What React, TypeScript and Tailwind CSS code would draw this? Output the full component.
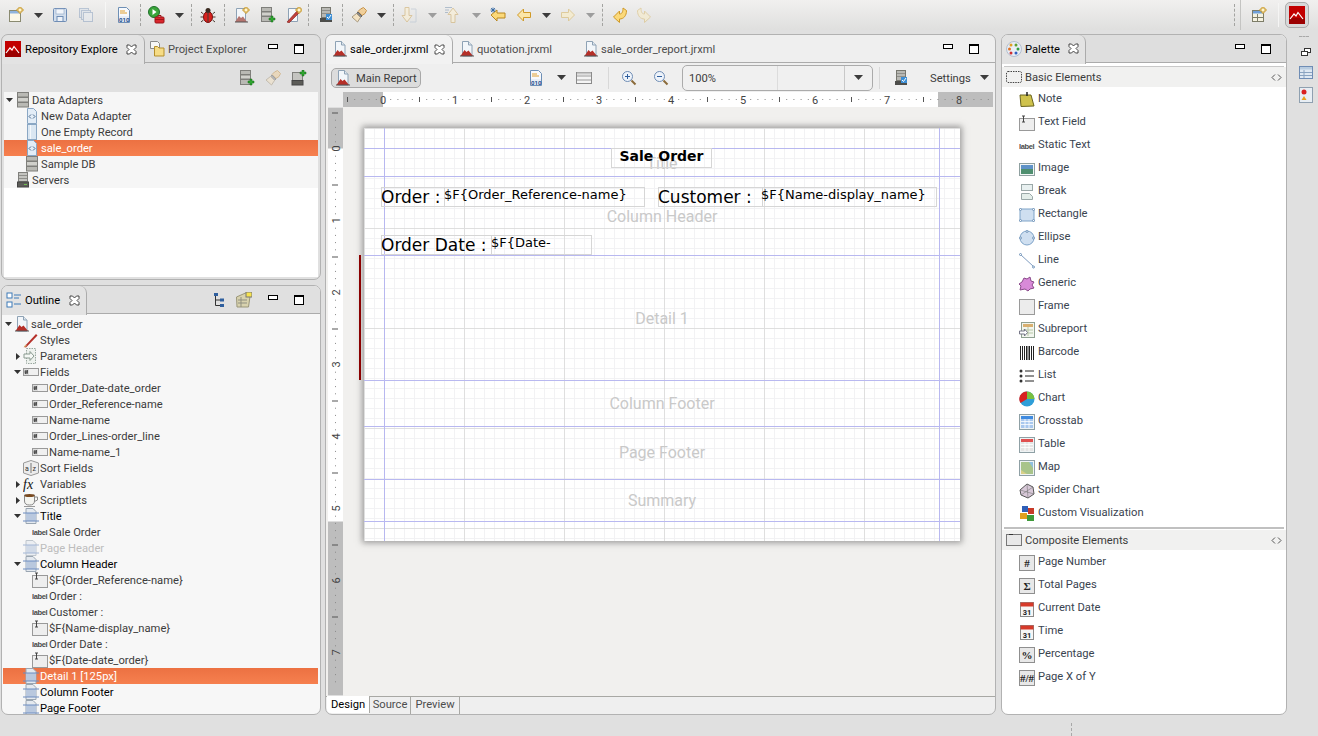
import type { ReactNode } from "react";

const Svg = ({ children, className = "" }: { children: ReactNode; className?: string }) => (
  <svg viewBox="0 0 16 16" className={"w-4 h-4 shrink-0 " + className}>
    {children}
  </svg>
);

type IconProps = { className?: string };

const ReportDoc = ({ className }: IconProps) => (
  <Svg className={className}>
    <path d="M3.500 .5h6l3.500 3.500v11h-9.500z" fill="#f2f6fa" stroke="#8ea2b5" />
    <path d="M9.500 .5v3.500h3.500" fill="#dfe7ef" stroke="#8ea2b5" />
    <path d="M1.500 15l4-6 2 2 2-1.500 4.500 5.500z" fill="#b52f28" />
    <path d="M1 15h14" stroke="#555" />
  </Svg>
);
const Database = ({ className }: IconProps) => (
  <Svg className={className}>
    <rect x="2.500" y=".5" width="11" height="4.500" fill="#b9b9b4" stroke="#7f7f7b" />
    <rect x="2.500" y="5.500" width="11" height="4.500" fill="#d0d0cb" stroke="#7f7f7b" />
    <rect x="2.500" y="10.500" width="11" height="4.500" fill="#b9b9b4" stroke="#7f7f7b" />
  </Svg>
);
const Server = ({ className }: IconProps) => (
  <Svg className={className}>
    <rect x="3.500" y=".5" width="9" height="9" fill="#c4c4c0" stroke="#80807c" />
    <path d="M4 3.500h8M4 6.500h8" stroke="#8f8f8b" />
    <rect x="2.500" y="10" width="11" height="5" fill="#5c5c58" stroke="#444" />
    <path d="M9 12.500h3" stroke="#6fbf50" />
  </Svg>
);
const XmlDoc = ({ className }: IconProps) => (
  <Svg className={className}>
    <path d="M3.500 .5h6l3 3v12h-9z" fill="#e3edf7" stroke="#8aa7c4" />
    <path d="M7 6.500l-2 2 2 2M9 6.500l2 2-2 2" fill="none" stroke="#4a6a8c" />
  </Svg>
);
const EmptyDoc = ({ className }: IconProps) => (
  <Svg className={className}>
    <rect x="3.500" y=".5" width="9" height="15" fill="#dbe7f2" stroke="#8aa7c4" />
    <path d="M6.500 1v14" stroke="#f4f8fb" />
  </Svg>
);
const PlusBadge = ({ x = 10, y = 11, color = "#2fa62f" }: { x?: number; y?: number; color?: string }) => (
  <path d={`M${x - 1} ${y - 3}h2v2h2v2h-2v2h-2v-2h-2v-2h2z`} fill={color} stroke="#17661a" strokeWidth=".5" />
);
const GoldPlus = ({ x = 12, y = 3 }: { x?: number; y?: number }) => (
  <path d={`M${x - 1} ${y - 3}h2v2h2v2h-2v2h-2v-2h-2v-2h2z`} fill="#fff6cf" stroke="#c99a2e" />
);
const DbAdd = ({ className }: IconProps) => (
  <Svg className={className}>
    <rect x="1.500" y=".5" width="10" height="4" fill="#b9b9b4" stroke="#7f7f7b" />
    <rect x="1.500" y="5" width="10" height="4" fill="#d0d0cb" stroke="#7f7f7b" />
    <rect x="1.500" y="9.500" width="10" height="5" fill="#b9b9b4" stroke="#7f7f7b" />
    <PlusBadge x={12} y={12} />
  </Svg>
);
const ServerAdd = ({ className }: IconProps) => (
  <Svg className={className}>
    <rect x="1.500" y="2.500" width="10" height="8" fill="#c4c4c0" stroke="#80807c" />
    <rect x="1" y="10.500" width="11" height="4.500" fill="#5c5c58" stroke="#444" />
    <PlusBadge x={12} y={3} />
  </Svg>
);
const Brush = ({ className = "", pale }: IconProps & { pale?: boolean }) => (
  <Svg className={className + (pale ? " opacity-50" : "")}>
    <path d="M9.500 2l3-1.500 3 3-1.500 3-3 2-4-4z" fill="#f0cf9a" stroke="#c6934a" />
    <path d="M7 5l4 4-1.500 1.500-4-4z" fill="#8a8a8a" stroke="#666" />
    <path d="M5.500 6.500l4 4-3 4.500-5.500-5z" fill="#f4e3c3" stroke="#a89a80" />
  </Svg>
);
const Close = () => (
  <svg viewBox="0 0 11 11" className="w-[11px] h-[11px] shrink-0">
    <path d="M1 1h2.500l2 2 2-2h2.500v2.500l-2 2 2 2v2.500h-2.500l-2-2-2 2h-2.500v-2.500l2-2-2-2z" fill="#fff" stroke="#333" strokeWidth=".9" />
  </svg>
);
const MinBtn = () => <div className="w-[10px] h-[5px] border border-black bg-white mb-[5px]" />;
const MaxBtn = () => (
  <div className="w-[10px] h-[10px] border border-black border-t-[2px] bg-white" />
);
const Arrow = ({ className = "", pale }: { className?: string; pale?: boolean }) => (
  <svg viewBox="0 0 9 5" className={"w-[9px] h-[5px] shrink-0 " + className}>
    <path d="M0 0h9l-4.500 5z" fill={pale ? "#9d9d9d" : "#3c3c3c"} />
  </svg>
);
const TreeDown = () => (
  <svg viewBox="0 0 7 4" className="w-[7px] h-[4px]">
    <path d="M0 0h7l-3.500 4z" fill="#333" />
  </svg>
);
const TreeRight = () => (
  <svg viewBox="0 0 4 7" className="w-[4px] h-[7px]">
    <path d="M0 0v7l4-3.500z" fill="#333" />
  </svg>
);
const Bin = ({ className }: IconProps) => (
  <Svg className={className}>
    <path d="M2.500 .5h8l3 3v12h-11z" fill="#f7f9fc" stroke="#6e8fb5" />
    <path d="M4 4h5M4 6h7" stroke="#e0a030" />
    <rect x="3" y="9" width="10" height="6" fill="#e8eef6" />
    <text x="3" y="14.500" className="text-[6px] font-bold" fill="#1e4f8e">010</text>
  </Svg>
);
const FieldIcon = () => (
  <Svg>
    <rect x=".5" y="4.500" width="15" height="7" fill="#f0f0f0" stroke="#999" />
    <rect x="1" y="5" width="5" height="6" fill="#dcdcdc" />
    <path d="M3 6l-.5 4M4.500 6l-.5 4M1.500 7.200h3.500M1.500 8.800h3.500" stroke="#333" strokeWidth=".8" />
  </Svg>
);
const LabelIcon = () => (
  <Svg>
    <text x="0" y="11" className="font-['Liberation_Sans',sans-serif] text-[7.500px] font-bold" textLength="15.500" fill="#4a4a4a">label</text>
  </Svg>
);
const TextFieldIcon = () => (
  <Svg>
    <rect x=".5" y="3.500" width="15" height="12" fill="#eeeeee" stroke="#999" />
    <path d="M3 1h3M3 7h3M4.500 1v6" stroke="#444" />
  </Svg>
);
const BandIcon = ({ className }: IconProps) => (
  <Svg className={className}>
    <path d="M3 .5h7l3 3v12h-10z" fill="#e4e9ef" stroke="#9aa6b2" />
    <rect x="3" y="5" width="10" height="8" fill="#b9c8de" />
    <path d="M0 5h16M0 13h16" stroke="#6d8cc0" />
  </Svg>
);

const Jasper = () => (
  <svg viewBox="0 0 16 16" className="w-4 h-4 shrink-0">
    <rect width="16" height="16" fill="#c20000" />
    <rect y="10" width="16" height="6" fill="#9c0000" />
    <path d="M1 12l4-5 2 2 2-3.500 5 6.500" fill="none" stroke="#fff" strokeWidth="1.200" />
  </svg>
);

const ArrowShape = ({ d, color, className }: { d: string; color: string; className?: string }) => (
  <Svg className={className}>
    <path d={d} fill={color} stroke="#d09a28" />
  </Svg>
);

const ToolbarDash = ({ className }: IconProps) => (
  <div className={"w-px h-[22px] border-l border-dashed border-[#a3a3a0] shrink-0 " + className} />
);

const ReportAdd = ({ className }: IconProps) => (
  <Svg className={className}>
    <path d="M2.500 1.500h9v13h-9z" fill="#f4f7fa" stroke="#8ea2b5" />
    <path d="M1 15l4-6 2 2 2-1.500 4 5.500z" fill="#b5746e" />
    <path d="M1 15h13" stroke="#555" />
    <GoldPlus x={12} y={3} />
  </Svg>
);

const TopToolbar = () => (
  <div className="h-[30px] flex items-center bg-[linear-gradient(#f1f0ef,#dfdfde)]">
    <Svg className="ml-[8px]">
      <rect x="1.500" y="3.500" width="11" height="11" fill="#fbf8e8" stroke="#8a8a70" />
      <rect x="2" y="4" width="10" height="2.500" fill="#8fb4dd" />
      <GoldPlus x={12} y={3} />
    </Svg>
    <Arrow className="ml-[10px]" />
    <Svg className="ml-[9px]">
      <rect x="1.500" y="1.500" width="13" height="13" rx="1" fill="#d3deec" stroke="#6f8db5" />
      <rect x="4" y="2" width="8" height="5" fill="#f2f5fa" stroke="#8ba4c5" strokeWidth=".6" />
      <rect x="5" y="9.500" width="6" height="5" fill="#eef2f8" stroke="#6f8db5" />
    </Svg>
    <Svg className="ml-[10px] opacity-40">
      <rect x="1.500" y="1.500" width="9" height="9" fill="#d3deec" stroke="#6f8db5" />
      <rect x="3.500" y="3.500" width="9" height="9" fill="#d3deec" stroke="#6f8db5" />
      <rect x="5.500" y="5.500" width="9" height="9" fill="#e6ecf4" stroke="#6f8db5" />
    </Svg>
    <div className="ml-[11px] w-px h-[26px] bg-[#f7f7f6] shrink-0" />
    <Bin className="ml-[10px]" />
    <ToolbarDash className="ml-[8px]" />
    <svg viewBox="0 0 17 18" className="ml-[7px] w-[17px] h-[18px] shrink-0">
      <circle cx="6" cy="6" r="5.500" fill="#3aa53a" stroke="#1f6f2a" />
      <path d="M4.500 3l4 3-4 3z" fill="#fff" />
      <rect x="7" y="11" width="9" height="6" rx="1" fill="#d9262c" stroke="#9c1518" />
      <path d="M7 13.500h9M10 11V9.500h3V11" stroke="#9c1518" fill="none" />
    </svg>
    <Arrow className="ml-[10px]" />
    <ToolbarDash className="ml-[7px]" />
    <Svg className="ml-[8px]">
      <ellipse cx="8" cy="10" rx="4.500" ry="5.500" fill="#d8201c" stroke="#7a1210" />
      <circle cx="8" cy="3.500" r="2.500" fill="#3a2a20" />
      <path d="M8 5v10M3.500 7L1 5M12.500 7L15 5M3 10H.5M13 10h2.500M3.500 13L1 15M12.500 13l2.500 2" stroke="#4a3a30" fill="none" />
    </Svg>
    <ToolbarDash className="ml-[8px]" />
    <ReportAdd className="ml-[9px]" />
    <DbAdd className="ml-[10px]" />
    <Svg className="ml-[10px]">
      <path d="M2.500 1.500h9v13h-9z" fill="#f6f8fb" stroke="#8ea2b5" />
      <path d="M1 15L11 4l2 2L3 16z" fill="#c0403a" stroke="#7a1f1c" strokeWidth=".6" />
      <GoldPlus x={13} y={3} />
    </Svg>
    <ToolbarDash className="ml-[6px]" />
    <Svg className="ml-[9px]">
      <rect x="3.500" y=".5" width="9" height="10" fill="#b9b9b4" stroke="#77776f" />
      <path d="M4 3.500h8M4 6.500h8" stroke="#8f8f8b" />
      <rect x="2" y="11" width="12" height="4" fill="#4d4d4a" />
      <rect x="8" y="7" width="6" height="6" fill="#3d8fd6" />
      <path d="M9 10l1.500 1.500L13 8" stroke="#fff" fill="none" />
    </Svg>
    <ToolbarDash className="ml-[8px]" />
    <Brush className="ml-[8px]" />
    <Arrow className="ml-[10px]" />
    <ToolbarDash className="ml-[7px]" />
    <Svg className="ml-[7px] opacity-60">
      <path d="M4 .5h4v8h3l-5 6.500-5-6.500h3z" fill="#fbf0d4" stroke="#d0b070" />
      <path d="M10 2h5v13H9" fill="none" stroke="#b8c4d2" />
    </Svg>
    <Arrow pale className="ml-[11px]" />
    <Svg className="ml-[7px] opacity-60">
      <path d="M7 15.500h4v-8h3L9 1 4 7.500h3z" fill="#fbf0d4" stroke="#d0b070" />
      <path d="M1 .5h7M1 3h4M1 5.500h3" stroke="#8aa0b8" />
    </Svg>
    <Arrow pale className="ml-[12px]" />
    <Svg className="ml-[9px]">
      <path d="M1 8l6-5v3h8v5H7v3z" fill="#fbd97a" stroke="#b8861e" />
      <path d="M3 .5v5M.5 3h5M1 1l4 4M5 1L1 5" stroke="#2a5f9e" strokeWidth=".8" />
    </Svg>
    <ArrowShape className="ml-[10px]" d="M1.500 8l6-6v3.500h7v5h-7V14z" color="#fbe6a8" />
    <Arrow className="ml-[10px]" />
    <Svg className="ml-[9px] opacity-60">
      <path d="M14.500 8l-6-6v3.500h-7v5h7V14z" fill="#fbeec4" stroke="#d8b86a" />
    </Svg>
    <Arrow pale className="ml-[10px]" />
    <ToolbarDash className="ml-[7px]" />
    <ArrowShape className="ml-[9px]" d="M1.500 10l6 5.500v-3.500c4 0 7-3 7-8.500L11 1c0 4-1 6-3.500 6V4z" color="#fbd97a" />
    <Svg className="ml-[8px] opacity-50">
      <path d="M14.500 10l-6 5.500v-3.500c-4 0-7-3-7-8.500L5 1c0 4 1 6 3.500 6V4z" fill="#fbeec4" stroke="#d8b86a" />
    </Svg>
    <ToolbarDash className="ml-auto" />
    <div className="ml-[5px] w-px h-[30px] bg-[#c4c4c2] shrink-0" />
    <Svg className="ml-[10px]">
      <rect x="1.500" y="3.500" width="11" height="11" fill="#f5f2e0" stroke="#7d7d68" />
      <rect x="2" y="4" width="10" height="2.500" fill="#6f9fd8" />
      <path d="M6.500 7v7M2 10.500h10" stroke="#7d7d68" />
      <GoldPlus x={12} y={3} />
    </Svg>
    <div className="ml-[11px] w-px h-[24px] bg-[#f5f5f4] shrink-0" />
    <div className="ml-[6px] mr-[9px] w-[24px] h-[26px] rounded-[5px] border border-[#aaa] bg-[#d8d8d8] flex items-center justify-center shrink-0">
      <svg viewBox="0 0 16 18" className="w-4 h-[20px]">
        <rect width="16" height="18" fill="#c20000" />
        <rect y="12" width="16" height="6" fill="#9c0000" />
        <path d="M1 13l4-5 2 2 2-3.500 5 6.500" fill="none" stroke="#fff" strokeWidth="1.200" />
      </svg>
    </div>
  </div>
);

const Row = ({
  pad,
  arrow,
  icon,
  label,
  selected,
  className = "",
}: {
  pad: string;
  arrow?: "down" | "right";
  icon: ReactNode;
  label: string;
  selected?: boolean;
  className?: string;
}) => (
  <div
    className={
      "h-4 flex items-center whitespace-nowrap shrink-0 " +
      pad +
      (selected ? " bg-[linear-gradient(#ec7142,#f6804f)] text-white " : " ") +
      className
    }
  >
    <div className="w-[11px] flex items-center justify-center shrink-0">
      {arrow === "down" && <TreeDown />}
      {arrow === "right" && <TreeRight />}
    </div>
    {icon}
    <span className="ml-px mt-[2px] leading-4">{label}</span>
  </div>
);

const Tab = ({ icon, label, active, strip }: { icon: ReactNode; label: string; active?: boolean; strip: string }) => (
  <div
    className={
      "flex items-center shrink-0 " +
      strip +
      (active ? " rounded-t-[7px] border-r border-[#ababab] -mb-px h-[29px]" : " h-[28px]")
    }
  >
    {icon}
    <span className={"whitespace-nowrap " + (active ? "mt-[2px] text-black" : "mt-[4px] text-[#4d4d4d]")}>{label}</span>
  </div>
);

const PanelControls = ({ className = "" }: { className?: string }) => (
  <div className={"flex items-center " + className}>
    <MinBtn />
    <div className="ml-[16px]">
      <MaxBtn />
    </div>
  </div>
);

const Panel = ({ children, className = "" }: { children: ReactNode; className?: string }) => (
  <div className={"border border-[#b2b2b2] rounded-[7px] overflow-hidden flex flex-col " + className}>{children}</div>
);

const RepoPanel = () => (
  <Panel className="h-[246px] bg-[#e0e0e0]">
    <div className="h-[28px] flex items-center border-b border-[#ababab] shrink-0">
      <Tab
        active
        strip="w-[143px] pl-[3px] gap-[4px] bg-[#e3e3e3]"
        icon={<Jasper />}
        label="Repository Explore"
      />
      <div className="absolute ml-[124px] mt-px">
        <Close />
      </div>
      <Tab
        strip="w-[106px] pl-[4px] gap-[3px]"
        icon={
          <Svg>
            <path d="M1.500 .5h7l2 2v5h-9z" fill="#f7f7f7" stroke="#8a8a8a" />
            <path d="M5.500 8V5.500h3l1.500 1.500h5v8h-9.500z" fill="#f6dc86" stroke="#b58f2c" />
          </Svg>
        }
        label="Project Explorer"
      />
      <PanelControls className="ml-[17px]" />
    </div>
    <div className="h-[29px] flex items-center justify-end pr-[13px] gap-[10px] shrink-0">
      <DbAdd />
      <Brush pale />
      <ServerAdd />
    </div>
    <div className="mx-[2px] mb-[2px] flex-1 bg-white flex flex-col text-[#3c3c3c]">
      <Row pad="pl-0 bg-[#f6f6f6]" arrow="down" icon={<Database />} label="Data Adapters" />
      <Row pad="pl-[9px] bg-[#f6f6f6]" icon={<XmlDoc />} label="New Data Adapter" />
      <Row pad="pl-[9px] bg-[#f6f6f6]" icon={<EmptyDoc />} label="One Empty Record" />
      <Row pad="pl-[9px]" selected icon={<XmlDoc />} label="sale_order" />
      <Row pad="pl-[9px] bg-[#f6f6f6]" icon={<Database />} label="Sample DB" />
      <Row pad="pl-0 bg-[#f6f6f6]" icon={<Server />} label="Servers" />
    </div>
  </Panel>
);

const OutlinePanel = () => (
  <Panel className="h-[430px] bg-[#f7f7f7]">
    <div className="h-[28px] flex items-center border-b border-[#ababab] bg-[#e0e0e0] shrink-0">
      <Tab
        active
        strip="w-[85px] pl-[4px] gap-[3px] bg-[#e3e3e3]"
        icon={
          <Svg>
            <rect x="1" y="1" width="5" height="5" fill="#fff" stroke="#3d7ab8" />
            <rect x="1" y="10" width="5" height="5" fill="#fff" stroke="#3d7ab8" />
            <path d="M8 3h7M8 6h5M8 12h7" stroke="#3d7ab8" />
          </Svg>
        }
        label="Outline"
      />
      <div className="absolute ml-[67px] mt-px">
        <Close />
      </div>
      <Svg className="ml-[125px]">
        <rect x="2" y="1" width="4" height="3" fill="#2f5f9e" />
        <rect x="8" y="6.500" width="4" height="3" fill="#2f5f9e" />
        <rect x="8" y="12" width="4" height="3" fill="#2f5f9e" />
        <path d="M3.500 4v9.500H8M3.500 8H8" stroke="#333" fill="none" />
      </Svg>
      <Svg className="ml-[8px]">
        <path d="M.5 5l9-4h5l-2 14H1z" fill="#d8d2ae" stroke="#9a9678" />
        <path d="M2 8h9M2 11h9M5 5v10" stroke="#8f8f80" />
        <rect x="10" y="0" width="6" height="5" fill="#f6e24e" stroke="#777" />
      </Svg>
      <PanelControls className="ml-[16px]" />
    </div>
    <div className="pt-[2px] pl-px pr-[2px] flex-1 flex flex-col overflow-hidden text-[#3c3c3c]">
      <Row pad="" arrow="down" icon={<ReportDoc />} label="sale_order" />
      <Row
        pad="pl-[9px]"
        icon={
          <Svg>
            <path d="M1 15L13 2l1.500 1.500L3 15.500z" fill="#b5302a" />
            <path d="M.5 15.500l2-3 1.500 1.500z" fill="#d8b070" />
          </Svg>
        }
        label="Styles"
      />
      <Row
        pad="pl-[9px]"
        arrow="right"
        icon={
          <Svg>
            <path d="M3.500 .5h9v15h-9z" fill="#eef2ee" stroke="#9aa8a0" strokeDasharray="1.500 1" />
            <path d="M1 6h6V3.500L11 8l-4 4.500V10H1z" fill="#f5f8f5" stroke="#8a9a90" />
          </Svg>
        }
        label="Parameters"
      />
      <Row pad="pl-[9px]" arrow="down" icon={<FieldIcon />} label="Fields" />
      <Row pad="pl-[18px]" icon={<FieldIcon />} label="Order_Date-date_order" />
      <Row pad="pl-[18px]" icon={<FieldIcon />} label="Order_Reference-name" />
      <Row pad="pl-[18px]" icon={<FieldIcon />} label="Name-name" />
      <Row pad="pl-[18px]" icon={<FieldIcon />} label="Order_Lines-order_line" />
      <Row pad="pl-[18px]" icon={<FieldIcon />} label="Name-name_1" />
      <Row
        pad="pl-[9px]"
        icon={
          <Svg>
            <path d="M.5 3l7.500-2.500L15.500 3v10L8 15.500.5 13z" fill="#ececec" stroke="#999" />
            <path d="M8 3v10" stroke="#777" />
            <text x="2" y="11" className="text-[7px]" fill="#333">a</text>
            <text x="9.500" y="11" className="text-[7px]" fill="#333">z</text>
          </Svg>
        }
        label="Sort Fields"
      />
      <Row
        pad="pl-[9px]"
        arrow="right"
        icon={
          <Svg>
            <text x="0" y="13" className="font-['Liberation_Serif',serif] text-[14px] italic" fill="#111">fx</text>
          </Svg>
        }
        label="Variables"
      />
      <Row
        pad="pl-[9px]"
        arrow="right"
        icon={
          <Svg>
            <path d="M1.500 3h10v6c0 3-2 4-5 4s-5-1-5-4z" fill="#f4f4f0" stroke="#888" />
            <ellipse cx="6.500" cy="3.500" rx="5" ry="1.500" fill="#7a4a20" />
            <path d="M11.500 5h3v3l-3 1.500" fill="none" stroke="#888" />
            <path d="M1 14.500h11" stroke="#999" />
          </Svg>
        }
        label="Scriptlets"
      />
      <Row pad="pl-[9px] text-black" arrow="down" icon={<BandIcon />} label="Title" />
      <Row pad="pl-[18px]" icon={<LabelIcon />} label="Sale Order" />
      <Row pad="pl-[9px] text-[#bdbdbd]" icon={<BandIcon className="opacity-60" />} label="Page Header" />
      <Row pad="pl-[9px] text-black" arrow="down" icon={<BandIcon />} label="Column Header" />
      <Row pad="pl-[18px]" icon={<TextFieldIcon />} label="$F{Order_Reference-name}" />
      <Row pad="pl-[18px]" icon={<LabelIcon />} label="Order :" />
      <Row pad="pl-[18px]" icon={<LabelIcon />} label="Customer :" />
      <Row pad="pl-[18px]" icon={<TextFieldIcon />} label="$F{Name-display_name}" />
      <Row pad="pl-[18px]" icon={<LabelIcon />} label="Order Date :" />
      <Row pad="pl-[18px]" icon={<TextFieldIcon />} label="$F{Date-date_order}" />
      <Row pad="pl-[9px]" selected icon={<BandIcon />} label="Detail 1 [125px]" />
      <Row pad="pl-[9px] text-black" icon={<BandIcon />} label="Column Footer" />
      <Row pad="pl-[9px] text-black" icon={<BandIcon />} label="Page Footer" />
    </div>
  </Panel>
);

const HRuler = () => {
  const marks = Array.from({ length: 90 }, (_, i) => i - 5);
  return (
    <svg viewBox="0 0 650 15" className="ml-[17px] w-[650px] h-[15px] shrink-0 bg-white font-['Roboto',sans-serif]">
      <rect width="40" height="15" fill="#bdbdbd" />
      <rect x="595" width="55" height="15" fill="#bdbdbd" />
      {marks.map((m) => {
        const x = 40 + m * 7.2;
        if (m % 10 === 0)
          return (
            <text key={m} x={x} y="12" textAnchor="middle" className="text-[11px]" fill="#444">
              {m / 10}
            </text>
          );
        return m % 5 === 0 ? (
          <rect key={m} x={x} y="5" width="1" height="5" fill="#555" />
        ) : (
          <rect key={m} x={x} y="7" width="1" height="1" fill="#8a8a8a" />
        );
      })}
    </svg>
  );
};

const VRuler = () => {
  const marks = Array.from({ length: 80 }, (_, i) => i - 5);
  return (
    <svg viewBox="0 0 15 588" className="ml-[2px] w-[15px] h-[589px] shrink-0 bg-white font-['Roboto',sans-serif]">
      <rect width="15" height="41" fill="#bdbdbd" />
      <rect y="414" width="15" height="174" fill="#bdbdbd" />
      {marks.map((m) => {
        const y = 41 + m * 7.2;
        if (m % 10 === 0)
          return (
            <text key={m} transform={`translate(12 ${y}) rotate(-90)`} textAnchor="middle" className="text-[11px]" fill="#444">
              {m / 10}
            </text>
          );
        return m % 5 === 0 ? (
          <rect key={m} x="4" y={y} width="6" height="1" fill="#555" />
        ) : (
          <rect key={m} x="7" y={y} width="1" height="1" fill="#8a8a8a" />
        );
      })}
    </svg>
  );
};

const BandLabel = ({ text, top }: { text: string; top: string }) => (
  <div className={"absolute left-0 w-full text-center text-[16px] leading-none font-['Roboto',sans-serif] text-[#c9c9c9] " + top}>{text}</div>
);
const HLine = ({ top }: { top: string }) => <div className={"absolute left-0 w-full h-px bg-[#b8b8f0] " + top} />;

const ReportPage = () => (
  <div className="relative ml-[21px] mt-[21px] w-[596px] h-[413px] shrink-0 bg-white font-['DejaVu_Sans',sans-serif] shadow-[0_0_6px_2px_rgba(90,90,90,0.55)] overflow-hidden">
    <div className="absolute inset-0 bg-[linear-gradient(#f2f2f4_1px,transparent_1px),linear-gradient(90deg,#f2f2f4_1px,transparent_1px)] bg-[size:10px_10px]" />
    <div className="absolute inset-0 bg-[linear-gradient(#dfdfdf_1px,transparent_1px),linear-gradient(90deg,#dfdfdf_1px,transparent_1px)] bg-[size:100px_100px]" />
    <div className="absolute top-0 left-[20px] w-px h-full bg-[#b8b8f0]" />
    <div className="absolute top-0 left-[575px] w-px h-full bg-[#b8b8f0]" />
    <HLine top="top-[20px]" />
    <HLine top="top-[48px]" />
    <HLine top="top-[127px]" />
    <HLine top="top-[252px]" />
    <HLine top="top-[298px]" />
    <HLine top="top-[351px]" />
    <HLine top="top-[393px]" />
    <BandLabel text="Title" top="top-[28px]" />
    <BandLabel text="Column Header" top="top-[81px]" />
    <BandLabel text="Detail 1" top="top-[183px]" />
    <BandLabel text="Column Footer" top="top-[268px]" />
    <BandLabel text="Page Footer" top="top-[317px]" />
    <BandLabel text="Summary" top="top-[365px]" />

    <div className="absolute left-[247px] top-[20px] w-[101px] h-[20px] border border-[#d6d6d6] text-center text-[14px] leading-[15px] font-bold text-black">
      Sale Order
    </div>
    <div className="absolute left-[17px] top-[59px] w-[64px] h-[20px] border border-[#d6d6d6] indent-[-1px] text-[17px] leading-[19px] text-black whitespace-nowrap">
      Order :
    </div>
    <div className="absolute left-[80px] top-[59px] w-[201px] h-[20px] border border-[#d6d6d6] indent-[-1px] text-[13px] leading-[13px] text-black whitespace-nowrap">
      $F&#123;Order_Reference-name&#125;
    </div>
    <div className="absolute left-[294px] top-[59px] w-[105px] h-[20px] border border-[#d6d6d6] indent-[-1px] text-[17px] leading-[19px] text-black whitespace-nowrap">
      Customer :
    </div>
    <div className="absolute left-[398px] top-[59px] w-[175px] h-[20px] border border-[#d6d6d6] indent-[-2px] text-[13px] leading-[13px] text-black whitespace-nowrap">
      $F&#123;Name-display_name&#125;
    </div>
    <div className="absolute left-[17px] top-[107px] w-[111px] h-[20px] border border-[#d6d6d6] indent-[-1px] text-[17px] leading-[19px] text-black whitespace-nowrap">
      Order Date :
    </div>
    <div className="absolute left-[127px] top-[107px] w-[101px] h-[20px] border border-[#d6d6d6] indent-[-1px] text-[13px] leading-[13px] text-black whitespace-nowrap">
      $F&#123;Date-
    </div>
  </div>
);

const ZoomIcon = ({ plus, className }: IconProps & { plus?: boolean }) => (
  <Svg className={className}>
    <circle cx="6.500" cy="6.500" r="5" fill="#eef3fa" stroke="#6f8db5" />
    <path d="M4 6.500h5" stroke="#2f5f9e" />
    {plus && <path d="M6.500 4v5" stroke="#2f5f9e" />}
    <path d="M10.500 10.500l4 4" stroke="#8a6a3a" strokeWidth="2" />
  </Svg>
);

const EditorPanel = () => (
  <Panel className="w-[671px] bg-[#efefef]">
    <div className="h-[28px] flex items-center border-b border-[#ababab] shrink-0">
      <Tab active strip="w-[127px] pl-[6px] gap-[2px] bg-[#f2f2f2]" icon={<ReportDoc />} label="sale_order.jrxml" />
      <div className="absolute ml-[108px] mt-px">
        <Close />
      </div>
      <Tab strip="w-[124px] pl-[6px] gap-[2px]" icon={<ReportDoc />} label="quotation.jrxml" />
      <Tab strip="w-[200px] pl-[6px] gap-[2px]" icon={<ReportDoc />} label="sale_order_report.jrxml" />
      <PanelControls className="ml-[166px]" />
    </div>
    <div className="h-[29px] flex items-center shrink-0 text-[#3c3c3c]">
      <div className="ml-[5px] w-[90px] h-[20px] rounded-[5px] border border-[#a8a8a8] bg-[#dcdcdc] flex items-center pl-[3px] gap-[5px]">
        <ReportDoc />
        <span className="whitespace-nowrap mt-[4px]">Main Report</span>
      </div>
      <Bin className="ml-[107px]" />
      <Arrow className="ml-[13px]" />
      <Svg className="ml-[10px]">
        <rect x=".5" y="2.500" width="15" height="11" fill="#f4f4f4" stroke="#8a8a8a" />
        <path d="M1 6h14M1 10h14" stroke="#9a9a9a" />
        <path d="M1 3.500h14" stroke="#c8c8c8" strokeWidth="2" />
      </Svg>
      <div className="ml-[16px] w-px h-[22px] bg-[#d8d8d8]" />
      <ZoomIcon plus className="ml-[12px]" />
      <ZoomIcon className="ml-[16px]" />
      <div className="ml-[13px] w-[191px] h-[26px] rounded-[5px] border border-[#ababab] bg-[#f0f0f0] flex items-center">
        <span className="ml-[6px] mt-[4px] w-[88px]">100%</span>
        <div className="w-px h-full bg-[#dcdcdc]" />
        <div className="flex-1" />
        <div className="w-px h-full bg-[#c8c8c8]" />
        <div className="w-[27px] flex justify-center">
          <Arrow />
        </div>
      </div>
      <div className="ml-[6px] w-px h-[22px] bg-[#d8d8d8]" />
      <Svg className="ml-[13px]">
        <rect x="3.500" y=".5" width="9" height="10" fill="#b9b9b4" stroke="#77776f" />
        <path d="M4 3.500h8M4 6.500h8" stroke="#8f8f8b" />
        <rect x="2" y="11" width="12" height="4" fill="#4d4d4a" />
        <rect x="8" y="7" width="6" height="6" fill="#3d8fd6" />
        <path d="M9 10l1.500 1.500L13 8" stroke="#fff" fill="none" />
      </Svg>
      <span className="ml-[21px] mt-[4px]">Settings</span>
      <Arrow className="ml-[9px]" />
    </div>
    <HRuler />
    <div className="flex-1 flex bg-[#f1f0ee] overflow-hidden min-h-0 relative">
      <VRuler />
      <ReportPage />
      <div className="absolute left-[33px] top-[148px] w-[2px] h-[125px] bg-[#8b0000]" />
    </div>
    <div className="h-[18px] flex items-stretch border-t border-[#a8a8a4] shrink-0 text-[#4d4d4d]">
      <div className="ml-px w-[43px] -mt-px h-[17px] pt-px bg-white text-black text-center rounded-bl-[4px] border-r border-[#a8a8a4]">Design</div>
      <div className="w-[41px] text-center border-r border-[#a8a8a4]">Source</div>
      <div className="w-[49px] text-center border-r border-[#a8a8a4]">Preview</div>
    </div>
  </Panel>
);

const PaletteItem = ({ icon, label }: { icon: ReactNode; label: string }) => (
  <div className="h-[23px] flex items-center pl-[17px] gap-[3px] shrink-0 text-[#3a4450]">
    {icon}
    <span>{label}</span>
  </div>
);

const PaletteHeader = ({ icon, label }: { icon: ReactNode; label: string }) => (
  <div className="h-[20px] flex items-center pl-[4px] pr-[4px] gap-[3px] bg-[#f1f1f0] text-[#3c3c3c] shrink-0">
    {icon}
    <span className="mt-[2px]">{label}</span>
    <svg viewBox="0 0 11 7" className="ml-auto w-[11px] h-[7px]">
      <path d="M4 .5L1 3.500l3 3M7 .5l3 3-3 3" fill="none" stroke="#555" />
    </svg>
  </div>
);

const boxed = (glyph: string) => (
  <Svg>
    <rect x=".5" y=".5" width="15" height="15" fill="#e8e8e8" stroke="#8f8f8f" />
    <text x="8" y="12" textAnchor="middle" className="font-['Liberation_Serif',serif] text-[11px] font-bold" fill="#222">
      {glyph}
    </text>
  </Svg>
);

const calendar = (day: string) => (
  <Svg>
    <rect x="1.500" y="1.500" width="13" height="14" fill="#f6f6f6" stroke="#8a8a8a" />
    <rect x="1.500" y="1.500" width="13" height="4" fill="#d63a2a" />
    <text x="8" y="14" textAnchor="middle" className="text-[7.500px] font-bold" fill="#222">
      {day}
    </text>
  </Svg>
);

const Grid = ({ head, fill }: { head: string; fill: string }) => (
  <Svg>
    <rect x=".5" y=".5" width="15" height="15" fill="#eef3f4" stroke="#8fa0a5" />
    <rect x="2" y="2" width="12" height="12" fill={fill} />
    <rect x="2" y="2" width="12" height="3" fill={head} />
    <path d="M2 7.500h12M2 10.500h12M6 5v9M10 5v9" stroke="#fff" strokeWidth=".8" />
  </Svg>
);

const PalettePanel = () => (
  <Panel className="w-[287px] bg-white ml-[5px]">
    <div className="h-[28px] flex items-center border-b border-[#ababab] bg-[#dedede] shrink-0 relative">
      <Tab
        active
        strip="w-[84px] pl-[4px] gap-[3px] bg-[#e3e3e3]"
        icon={
          <Svg>
            <circle cx="8" cy="8" r="7.500" fill="#e8edf5" stroke="#b3bfd0" />
            <circle cx="5" cy="4" r="1.500" fill="#e0a020" />
            <circle cx="10" cy="4" r="1.500" fill="#60a030" />
            <circle cx="3.500" cy="8" r="1.500" fill="#e07020" />
            <circle cx="12" cy="8" r="1.500" fill="#30a040" />
            <circle cx="5" cy="12" r="1.500" fill="#d03030" />
            <circle cx="10" cy="12" r="1.500" fill="#3060c0" />
          </Svg>
        }
        label="Palette"
      />
      <div className="absolute left-[66px] top-[8px]">
        <Close />
      </div>
      <PanelControls className="ml-[149px]" />
    </div>
    <div className="mx-[2px] h-[4px] border-b border-[#c8c8c8] shrink-0" />
    <PaletteHeader
      label="Basic Elements"
      icon={
        <Svg>
          <rect x=".5" y="2.500" width="15" height="11" rx="1.500" fill="none" stroke="#444" strokeDasharray="1.500 1" />
        </Svg>
      }
    />
    <div className="flex flex-col h-[438px] pt-px">
      <PaletteItem
        label="Note"
        icon={
          <Svg>
            <path d="M1 3h11l3 11-13 .500z" fill="#cfc24c" stroke="#6a6420" />
            <path d="M8 0v4" stroke="#222" strokeWidth="1.500" />
          </Svg>
        }
      />
      <PaletteItem label="Text Field" icon={<TextFieldIcon />} />
      <PaletteItem label="Static Text" icon={<LabelIcon />} />
      <PaletteItem
        label="Image"
        icon={
          <Svg>
            <rect x=".5" y="2.500" width="15" height="12" fill="#f2f6f6" stroke="#8fa0a0" />
            <rect x="2" y="4" width="12" height="4" fill="#5f92c8" />
            <rect x="2" y="8" width="12" height="5" fill="#4f8f6f" />
          </Svg>
        }
      />
      <PaletteItem
        label="Break"
        icon={
          <Svg>
            <rect x="2.500" y=".5" width="11" height="6" fill="#e8f0f0" stroke="#9aa8a8" />
            <path d="M2.500 9.500h8l3 3v3h-11z" fill="#e4eeea" stroke="#9aa8a8" />
          </Svg>
        }
      />
      <PaletteItem
        label="Rectangle"
        icon={
          <Svg>
            <rect x="1" y="2" width="14" height="12" fill="#cfdff0" stroke="#7fa3c8" />
            <circle cx="1.500" cy="2.500" r="1" fill="#fff" stroke="#6f93b8" />
            <circle cx="14.500" cy="2.500" r="1" fill="#fff" stroke="#6f93b8" />
            <circle cx="1.500" cy="13.500" r="1" fill="#fff" stroke="#6f93b8" />
            <circle cx="14.500" cy="13.500" r="1" fill="#fff" stroke="#6f93b8" />
          </Svg>
        }
      />
      <PaletteItem
        label="Ellipse"
        icon={
          <Svg>
            <circle cx="8" cy="8" r="7" fill="#cfdff0" stroke="#7fa3c8" />
            <circle cx="8" cy="1.500" r="1" fill="#fff" stroke="#6f93b8" />
            <circle cx="1.500" cy="8" r="1" fill="#fff" stroke="#6f93b8" />
            <circle cx="14.500" cy="8" r="1" fill="#fff" stroke="#6f93b8" />
          </Svg>
        }
      />
      <PaletteItem
        label="Line"
        icon={
          <Svg>
            <path d="M1.500 1.500l13 12" stroke="#7f9cc0" />
            <circle cx="1.500" cy="1.500" r="1" fill="#fff" stroke="#6f93b8" />
            <circle cx="14.500" cy="14" r="1" fill="#fff" stroke="#6f93b8" />
          </Svg>
        }
      />
      <PaletteItem
        label="Generic"
        icon={
          <Svg>
            <path d="M5 2l3 1 3-2 1 4 3 1-2 3 2 3-4 1-2 2-3-2-5 1 1-4-2-2 3-2z" fill="#d88ad8" stroke="#8a4a8a" />
          </Svg>
        }
      />
      <PaletteItem
        label="Frame"
        icon={
          <Svg>
            <rect x=".5" y=".5" width="15" height="15" fill="#ececec" stroke="#9a9a9a" />
          </Svg>
        }
      />
      <PaletteItem
        label="Subreport"
        icon={
          <Svg>
            <rect x="2.500" y=".5" width="13" height="15" fill="#f2f6ee" stroke="#8fa090" />
            <rect x="4" y="2" width="10" height="3" fill="#d8b070" />
            <path d="M4 8h10M4 11h10M9 5v9" stroke="#b8c8a8" />
            <path d="M.5 9h5V7l3 3.500-3 3.500v-2h-5z" fill="#fff" stroke="#778" />
          </Svg>
        }
      />
      <PaletteItem
        label="Barcode"
        icon={
          <Svg>
            <path d="M1.500 1v14M3.500 1v14M5.500 1v14M7.500 1v14M9 1v14M10.500 1v14M12.500 1v14M14.500 1v14" stroke="#222" />
          </Svg>
        }
      />
      <PaletteItem
        label="List"
        icon={
          <Svg>
            <circle cx="2" cy="3" r="1.500" fill="#333" />
            <circle cx="2" cy="8" r="1.500" fill="#333" />
            <circle cx="2" cy="13" r="1.500" fill="#333" />
            <path d="M6 3h9M6 8h9M6 13h9" stroke="#222" />
          </Svg>
        }
      />
      <PaletteItem
        label="Chart"
        icon={
          <Svg>
            <circle cx="8" cy="8" r="7.500" fill="#2f9ed8" />
            <path d="M8 8V.5A7.500 7.500 0 0 1 15.500 8z" fill="#7ac040" />
            <path d="M8 8V.5A7.500 7.500 0 0 0 1.500 12z" fill="#d92020" />
          </Svg>
        }
      />
      <PaletteItem label="Crosstab" icon={<Grid head="#3f8be0" fill="#a9c8ee" />} />
      <PaletteItem label="Table" icon={<Grid head="#e05050" fill="#e4e4e4" />} />
      <PaletteItem
        label="Map"
        icon={
          <Svg>
            <rect x=".5" y=".5" width="15" height="15" fill="#eef3f4" stroke="#8fa0a5" />
            <rect x="2" y="2" width="12" height="12" fill="#a8c48a" />
            <path d="M10 2h4v6z" fill="#90c0e0" />
            <path d="M2 10l6 4H2z" fill="#d8d088" />
          </Svg>
        }
      />
      <PaletteItem
        label="Spider Chart"
        icon={
          <Svg>
            <path d="M8 1l6 3 1 7-6 4-7-3-1-5z" fill="#d8c8d8" stroke="#555" />
            <path d="M8 1l1 14M14 4L2 12M1 7l14 4" stroke="#777" strokeWidth=".6" />
          </Svg>
        }
      />
      <PaletteItem
        label="Custom Visualization"
        icon={
          <Svg>
            <rect x="3" y="0" width="6" height="6" fill="#2f5fb8" />
            <rect x="9" y="2" width="6" height="6" fill="#c83a28" />
            <rect x="1" y="7" width="7" height="6" fill="#e0a020" />
            <rect x="8" y="9" width="7" height="6" fill="#3f9a3a" />
          </Svg>
        }
      />
    </div>
    <div className="mx-[2px] h-[3px] border-t-2 border-[#c0c0c0] mt-[2px] shrink-0" />
    <PaletteHeader
      label="Composite Elements"
      icon={
        <Svg>
          <rect x=".5" y="2.500" width="15" height="11" fill="#e8e8e8" stroke="#777" />
          <path d="M3 2.500h4" stroke="#333" />
        </Svg>
      }
    />
    <div className="flex flex-col pt-px">
      <PaletteItem label="Page Number" icon={boxed("#")} />
      <PaletteItem label="Total Pages" icon={boxed("Σ")} />
      <PaletteItem label="Current Date" icon={calendar("31")} />
      <PaletteItem label="Time" icon={calendar("31")} />
      <PaletteItem label="Percentage" icon={boxed("%")} />
      <PaletteItem label="Page X of Y" icon={boxed("#/#")} />
    </div>
  </Panel>
);

const TrimStack = () => (
  <div className="w-[28px] ml-[3px] flex flex-col items-center shrink-0">
    <div className="mt-[2px] ml-[-1px] w-[10px] border-t border-dashed border-[#a8a8a8]" />
    <Svg className="mt-[7px] ml-[3px]">
      <rect x="6.500" y="4.500" width="6" height="4" fill="#fff" stroke="#333" />
      <rect x="3.500" y="7.500" width="6" height="4" fill="#fff" stroke="#333" />
    </Svg>
    <Svg className="mt-[5px] ml-[3px]">
      <rect x="1.500" y="1.500" width="13" height="12" fill="#dfe8f2" stroke="#6f8db5" />
      <rect x="2" y="2" width="12" height="2.500" fill="#b8cce0" />
      <path d="M2 7.500h12M2 10.500h12M6 5v8" stroke="#8aa3c0" />
    </Svg>
    <Svg className="mt-[6px] ml-[3px]">
      <rect x="1.500" y=".5" width="13" height="15" fill="#e8eef4" stroke="#8fa0b0" />
      <circle cx="6" cy="5" r="2.500" fill="#d92020" />
      <path d="M3.500 13l2.500-4 2.500 4z" fill="#e8a020" />
    </Svg>
  </div>
);

export default function App() {
  return (
    <div className="w-[1318px] h-[736px] overflow-hidden bg-[#e0e0e0] font-['Roboto',sans-serif] text-[11.200px] text-[#3c3c3c]">
      <TopToolbar />
      <div className="mt-[4px] flex h-[681px] pl-px">
        <div className="w-[320px] flex flex-col gap-[5px] shrink-0">
          <RepoPanel />
          <OutlinePanel />
        </div>
        <div className="ml-[4px]">
          <EditorPanel />
        </div>
        <PalettePanel />
        <TrimStack />
      </div>
      <div className="ml-[1071px] mt-[8px] h-[13px] w-px border-l border-dashed border-[#a8a8a8]" />
    </div>
  );
}
